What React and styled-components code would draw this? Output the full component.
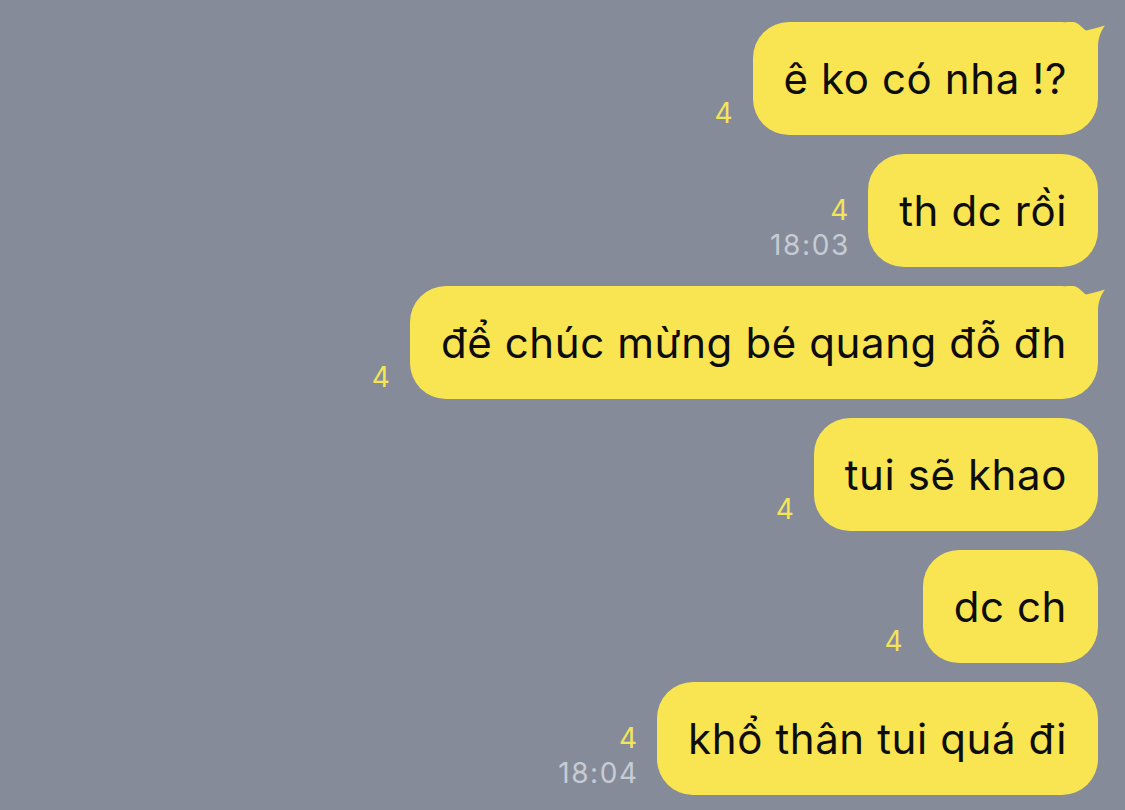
import React from "react";
import styled, { createGlobalStyle } from "styled-components";

const Global = createGlobalStyle`
  html, body { margin: 0; padding: 0; background: #858b99; }
  body { font-family: Inter, "Liberation Sans", Arial, sans-serif; }
`;

const Screen = styled.div`
  width: 1125px;
  height: 810px;
  overflow: hidden;
  background: #858b99;
  box-sizing: border-box;
  padding: 22px 27px 0 0;
  display: flex;
  flex-direction: column;
  align-items: flex-end;
  gap: 19px;
`;

const Row = styled.div`
  display: flex;
  align-items: flex-end;
  gap: 20px;
`;

const Meta = styled.div`
  display: flex;
  flex-direction: column;
  align-items: flex-end;
  padding-bottom: 4px;
  font-size: 28px;
  line-height: 35px;
`;

const Read = styled.span`
  color: #f4e45a;
`;

const Time = styled.span`
  color: #c6cbd4;
  letter-spacing: 1.6px;
  margin-right: -1.6px;
`;

const Bubble = styled.div`
  position: relative;
  height: 113px;
  box-sizing: border-box;
  padding: 0 31px;
  display: flex;
  align-items: center;
  background: #f9e551;
  border-radius: 36px;
  color: #0d0d0d;
  font-size: 42px;
  letter-spacing: 0.6px;
  white-space: nowrap;
`;

const Tail = styled.svg`
  position: absolute;
  top: 0;
  right: -8px;
  width: 40px;
  height: 45px;
  overflow: visible;
`;

const messages = [
  { text: "ê ko có nha !?", tail: true },
  { text: "th dc rồi", time: "18:03" },
  { text: "để chúc mừng bé quang đỗ đh", tail: true },
  { text: "tui sẽ khao" },
  { text: "dc ch" },
  { text: "khổ thân tui quá đi", time: "18:04" },
];

export default function App() {
  return (
    <>
      <Global />
      <Screen>
        {messages.map((m, i) => (
          <Row key={i}>
            <Meta>
              <Read>4</Read>
              {m.time && <Time>{m.time}</Time>}
            </Meta>
            <Bubble>
              {m.text}
              {m.tail && (
                <Tail viewBox="0 0 40 45">
                  <path
                    d="M0 0 L7 0 C12 0 16 6 20 8.5 C27 7 34 5 39 3.5 C35 9 32 15 32 26 L32 45 L0 45 Z"
                    fill="#f9e551"
                  />
                </Tail>
              )}
            </Bubble>
          </Row>
        ))}
      </Screen>
    </>
  );
}
